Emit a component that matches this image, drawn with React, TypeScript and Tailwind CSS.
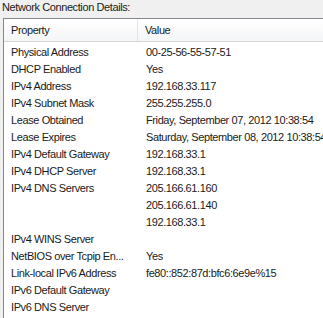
const rows: [string, string][] = [
  ['Physical Address', '00-25-56-55-57-51'],
  ['DHCP Enabled', 'Yes'],
  ['IPv4 Address', '192.168.33.117'],
  ['IPv4 Subnet Mask', '255.255.255.0'],
  ['Lease Obtained', 'Friday, September 07, 2012 10:38:54'],
  ['Lease Expires', 'Saturday, September 08, 2012 10:38:54'],
  ['IPv4 Default Gateway', '192.168.33.1'],
  ['IPv4 DHCP Server', '192.168.33.1'],
  ['IPv4 DNS Servers', '205.166.61.160'],
  ['', '205.166.61.140'],
  ['', '192.168.33.1'],
  ['IPv4 WINS Server', ''],
  ['NetBIOS over Tcpip En...', 'Yes'],
  ['Link-local IPv6 Address', 'fe80::852:87d:bfc6:6e9e%15'],
  ['IPv6 Default Gateway', ''],
  ['IPv6 DNS Server', ''],
]

export default function App() {
  return (
    <div
      className="w-[323px] h-[318px] overflow-hidden bg-[#f0f0f0] text-[11px] tracking-[-0.4px] text-[#1a1a1a]"
      style={{ fontFamily: '"Liberation Sans", Arial, sans-serif' }}
    >
      <div className="h-[18px] pl-[2px] leading-[14px]">Network Connection Details:</div>
      <div className="ml-[3px] w-[330px] h-[310px] border-l border-t border-[#828790] bg-white">
        <div className="flex h-[23px] border-b border-[#d5d5d5] bg-gradient-to-b from-white to-[#f4f5f7]">
          <div className="w-[134px] shrink-0 border-r border-[#e3e4e6] pl-[7px] flex items-center">Property</div>
          <div className="flex-1 pl-[7px] flex items-center">Value</div>
        </div>
        <div className="pt-[2px]">
          {rows.map(([k, v], i) => (
            <div key={i} className="flex h-[17px] items-center whitespace-nowrap">
              <div className="w-[135px] shrink-0 pl-[7px] overflow-hidden">{k}</div>
              <div className="pl-[7px]">{v}</div>
            </div>
          ))}
        </div>
      </div>
    </div>
  )
}
